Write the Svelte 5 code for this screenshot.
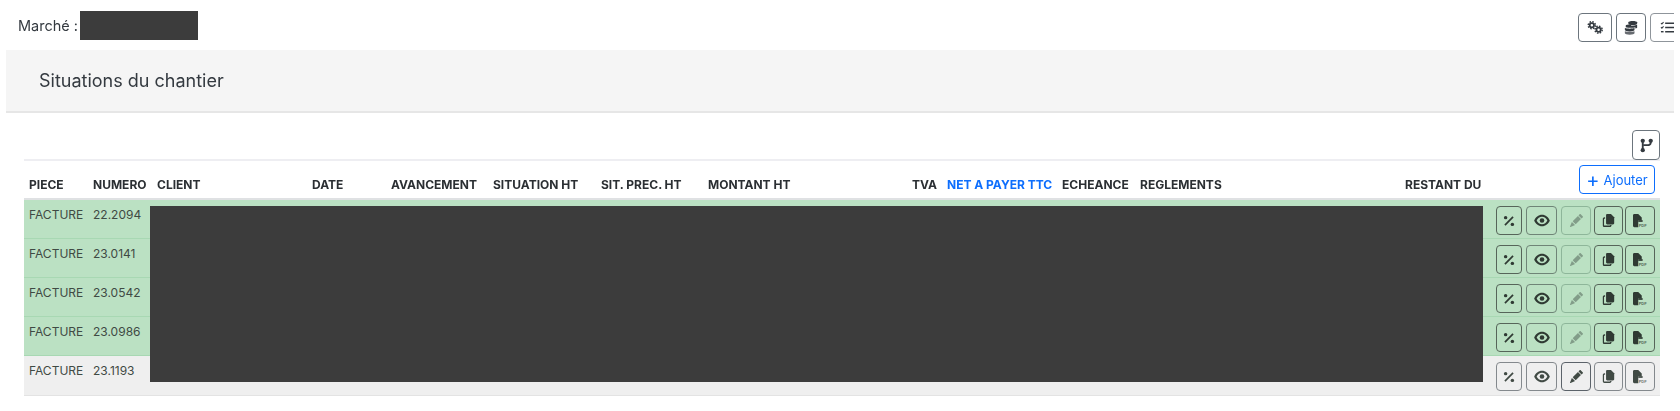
<script>
  const cols = [
    ['PIECE'], ['NUMERO'], ['CLIENT'], ['DATE'], ['AVANCEMENT'], ['SITUATION HT'], ['SIT. PREC. HT'],
    ['MONTANT HT'], ['TVA'], ['NET A PAYER TTC', true], ['ECHEANCE'], ['REGLEMENTS'], ['RESTANT DU'], ['']
  ];
  const rows = [
    { num: '22.2094', paid: true },
    { num: '23.0141', paid: true },
    { num: '23.0542', paid: true },
    { num: '23.0986', paid: true },
    { num: '23.1193', paid: false }
  ];
</script>

<div class="page">
  <header class="top">
    <span class="market">Marché :</span>
    <span class="mask-name"></span>
    <div class="tools">
      <button class="tool" aria-label="Réglages">
        <svg viewBox="0 0 20 16" width="18" height="15">
          <g fill="none" stroke="#343a40">
            <circle cx="6.5" cy="5.5" r="2.4" stroke-width="2"/>
            <circle cx="6.5" cy="5.5" r="4" stroke-width="1.6" stroke-dasharray="1.7 1.44"/>
            <circle cx="14" cy="10.5" r="2.4" stroke-width="2"/>
            <circle cx="14" cy="10.5" r="4" stroke-width="1.6" stroke-dasharray="1.7 1.44"/>
          </g>
        </svg>
      </button>
      <button class="tool second" aria-label="Base">
        <svg viewBox="0 0 16 16" width="14" height="14" fill="#343a40">
          <path d="M5 1.5C5 .7 7.2 0 10 0s5 .7 5 1.5v1.7C15 4 12.800 4.700 10 4.700S5 4 5 3.200z"/>
          <path d="M2 5.200c0-.8 2.700-1.200 5.500-1.200l1 1.400c2.500 0 4.700-.3 6.500-1v3.400c-.6.500-1.200.700-2 .9V7C11 7.800 5 7.800 2 7z"/>
          <path d="M1 8c2.600 1 8.400 1 11 0v2.400C12 11.300 9.500 12 6.500 12S1 11.300 1 10.400z"/>
          <path d="M1 11.600c2.600 1 8.400 1 11 0v2.400c0 .9-2.500 1.700-5.500 1.700S1 14.900 1 14z" opacity=".75"/>
        </svg>
      </button>
      <button class="tool third" aria-label="Liste">
        <svg viewBox="0 0 16 16" width="15" height="15" fill="none" stroke="#343a40">
          <path d="M5.500 3.500h9.500M5.500 8h9.500M5.500 12.500h9.500" stroke-width="1.500"/>
          <path d="M1 3.200l1 1 1.800-2M1 7.700l1 1 1.800-2" stroke-width="1.100"/>
          <path d="M1 12.500h2.800" stroke-width="1.500"/>
        </svg>
      </button>
    </div>
  </header>

  <div class="band"><h1>Situations du chantier</h1></div>

  <section class="content">
    <div class="toolbar">
      <button class="branch" aria-label="Branches">
        <svg viewBox="0 0 16 16" width="15" height="15" fill="#343a40">
          <circle cx="4" cy="3" r="2.300"/>
          <circle cx="4" cy="13" r="2.300"/>
          <circle cx="12.500" cy="3" r="2.300"/>
          <path d="M3 3h2v10H3z"/>
          <path d="M11.500 3h2v2c0 2.500-2 3.600-4.500 3.600H4.500v-2H9c1.500 0 2.500-.6 2.500-1.600z"/>
        </svg>
      </button>
    </div>

    <div class="grid head">
      {#each cols as [label, active], i}
        <div class="th" class:active>
          {#if i === cols.length - 1}
            <button class="add"><span class="plus">+</span> Ajouter</button>
          {:else}
            {label}
          {/if}
        </div>
      {/each}
    </div>

    <div class="rows">
      {#each rows as row}
        <div class="grid row" class:paid={row.paid}>
          <div class="td">FACTURE</div>
          <div class="td">{row.num}</div>
          <div class="td wide"></div>
          <div class="actions">
            <button class="act pct" aria-label="Pourcentage">
              <svg viewBox="0 0 16 16" width="12" height="12" fill="#2f3a33">
                <circle cx="3.500" cy="3.500" r="2.300"/>
                <circle cx="12.500" cy="12.500" r="2.300"/>
                <path d="M12.600 1.800l1.600 1.600-10.800 10.800-1.600-1.600z"/>
              </svg>
            </button>
            <button class="act eye" aria-label="Voir">
              <svg viewBox="0 0 18 14" width="16" height="13" fill="#2f3a33">
                <path fill-rule="evenodd" d="M9 .5c4 0 7.400 3 8.800 6.500-1.400 3.500-4.800 6.500-8.800 6.500S1.600 10.500.2 7C1.600 3.500 5 .5 9 .5zm0 2.300C6.400 2.800 4.100 4.700 3 7c1.100 2.300 3.400 4.200 6 4.200s4.900-1.900 6-4.200c-1.100-2.300-3.400-4.200-6-4.200z"/>
                <circle cx="9" cy="7" r="2.600"/>
              </svg>
            </button>
            <button class="act edit" class:off={row.paid} aria-label="Modifier">
              <svg viewBox="0 0 16 16" width="13" height="13" fill="#2f3a33">
                <path d="M12.854.146a.5.5 0 0 0-.707 0L10.500 1.793 14.207 5.500l1.647-1.646a.5.5 0 0 0 0-.708l-3-3zm.646 6.061L9.793 2.500 3.293 9H3.500a.5.5 0 0 1 .5.5v.5h.5a.5.5 0 0 1 .5.5v.5h.5a.5.5 0 0 1 .5.5v.5h.5a.5.5 0 0 1 .5.5v.207l6.500-6.500zm-7.468 7.468A.5.5 0 0 1 6 13.500V13h-.5a.5.5 0 0 1-.5-.5V12h-.5a.5.5 0 0 1-.5-.5V11h-.5a.5.5 0 0 1-.5-.5V10h-.5a.499.499 0 0 1-.175-.032l-.179.178a.5.5 0 0 0-.11.168l-2 5a.5.5 0 0 0 .65.650l5-2a.5.5 0 0 0 .168-.11l.178-.178z"/>
              </svg>
            </button>
            <button class="act copy" aria-label="Copier">
              <svg viewBox="0 0 16 16" width="13" height="13" fill="#2f3a33">
                <path d="M6.500 0H11l4 4v7.500c0 .8-.7 1.500-1.500 1.500h-7c-.8 0-1.500-.7-1.500-1.500v-10C5 .7 5.700 0 6.500 0z"/>
                <path fill-rule="evenodd" d="M3 4h.8v1.700H3c-.3 0-.5.2-.5.5v7.600c0 .3.200.5.500.5h6.500c.3 0 .5-.2.500-.5v-.3h1.700v.5c0 1-.8 2-2 2H3c-1.100 0-2-.9-2-2V6c0-1.100.9-2 2-2z"/>
              </svg>
            </button>
            <button class="act pdf" aria-label="PDF">
              <svg viewBox="0 0 16 16" width="14" height="14" fill="#2f3a33">
                <path d="M1.500 0H6l4 4v3H6v8H1.500C.7 15 0 14.300 0 13.500v-12C0 .7.700 0 1.500 0z"/>
                <path d="M6 7h5v2H6z"/>
                <text x="6.500" y="14.500" font-size="4.500" font-family="Liberation Sans, sans-serif" font-weight="700" opacity=".75">PDF</text>
              </svg>
            </button>
          </div>
        </div>
      {/each}
      <div class="mask-table"></div>
    </div>
  </section>
</div>

<style>
  :global(body) {
    margin: 0;
    background: #fff;
  }
  .page {
    width: 1674px;
    height: 411px;
    overflow: hidden;
    font-family: Inter, "Liberation Sans", sans-serif;
    color: #212529;
    filter: blur(0.45px);
  }
  button {
    font-family: inherit;
    cursor: pointer;
    background: transparent;
    padding: 0;
    display: flex;
    align-items: center;
    justify-content: center;
    box-sizing: border-box;
  }
  .top {
    height: 50px;
    display: flex;
    align-items: flex-start;
    box-sizing: border-box;
    padding-left: 18px;
  }
  .market {
    width: 62px;
    font-size: 14.500px;
    line-height: 17px;
    margin-top: 17px;
    color: #343a40;
    white-space: nowrap;
  }
  .mask-name {
    width: 118px;
    height: 29px;
    margin-top: 11px;
    background: #3c3c3c;
  }
  .tools {
    margin-left: auto;
    display: flex;
    gap: 4px;
    padding-top: 13px;
    margin-right: -10px;
  }
  .tool {
    width: 34px;
    height: 29px;
    background: #fff;
    border: 1.5px solid #6c757d;
    border-radius: 4px;
  }
  .tool.second {
    width: 30px;
  }
  .tool.third {
    border-color: #8f959b;
  }
  .band {
    margin-left: 6px;
    height: 63px;
    box-sizing: border-box;
    background: #f5f5f5;
    border-bottom: 2px solid #e6e6e6;
    display: flex;
    align-items: center;
    padding-left: 33px;
  }
  h1 {
    margin: 0;
    font-size: 18px;
    font-weight: 400;
    color: #343a40;
  }
  .content {
    margin: 0 14px 0 24px;
  }
  .toolbar {
    display: flex;
    justify-content: flex-end;
    padding-top: 17px;
    height: 48px;
    box-sizing: border-box;
    border-bottom: 2px solid #eeeef2;
  }
  .branch {
    width: 28px;
    height: 30px;
    border: 1.5px solid #6c757d;
    border-radius: 4px;
    background: #fff;
  }
  .grid {
    display: grid;
    grid-template-columns: 64px 64px 155px 79px 102px 108px 107px 204px 35px 115px 78px 265px 91px 169px;
  }
  .head {
    height: 39px;
    box-sizing: border-box;
    border-bottom: 2px solid #dfe1e3;
  }
  .th {
    font-size: 12px;
    font-weight: 700;
    line-height: 16px;
    padding: 16px 0 0 5px;
    white-space: nowrap;
    color: #2b2f33;
  }
  .th.active {
    color: #0d6efd;
  }
  .th:last-child {
    padding: 4px 5px 0 0;
    display: flex;
    justify-content: flex-end;
  }
  .add {
    width: 76px;
    height: 29px;
    border: 1.5px solid #0d6efd;
    border-radius: 4px;
    background: #fff;
    color: #0d6efd;
    font-size: 13px;
    font-weight: 400;
    gap: 4px;
  }
  .plus {
    font-size: 20px;
    line-height: 18px;
  }
  .rows {
    position: relative;
  }
  .row {
    height: 39px;
    box-sizing: border-box;
    background: #efefef;
    border-bottom: 1px solid #e3e3e3;
    grid-template-columns: 64px 64px 1339px 169px;
  }
  .row.paid {
    background: #bbe1c3;
    border-bottom-color: #a8d8b3;
  }
  .row:nth-last-child(2) {
    height: 40px;
  }
  .td {
    font-size: 12px;
    line-height: 16px;
    padding: 7px 0 0 5px;
    color: #3f4a44;
    white-space: nowrap;
  }
  .actions {
    display: flex;
    padding: 6px 0 0 5px;
  }
  .act {
    height: 29px;
    border: 1.5px solid #566559;
    border-radius: 4px;
  }
  .row:not(.paid) .act {
    border-color: #84898d;
  }
  .row:not(.paid) .act svg {
    opacity: 0.9;
  }
  .pct {
    width: 26px;
  }
  .eye {
    width: 31px;
    margin-left: 4px;
    border-color: #6f8577;
  }
  .edit {
    width: 30px;
    margin-left: 4px;
  }
  .row:not(.paid) .edit {
    border-color: #5c636a;
  }
  .edit.off {
    border-color: #8eb69a;
  }
  .edit.off svg {
    opacity: 0.4;
  }
  .copy {
    width: 29px;
    margin-left: 3px;
  }
  .pdf {
    width: 30px;
    margin-left: 2px;
  }
  .mask-table {
    position: absolute;
    left: 126px;
    top: 6px;
    width: 1333px;
    height: 176px;
    background: #3c3c3c;
  }
</style>
